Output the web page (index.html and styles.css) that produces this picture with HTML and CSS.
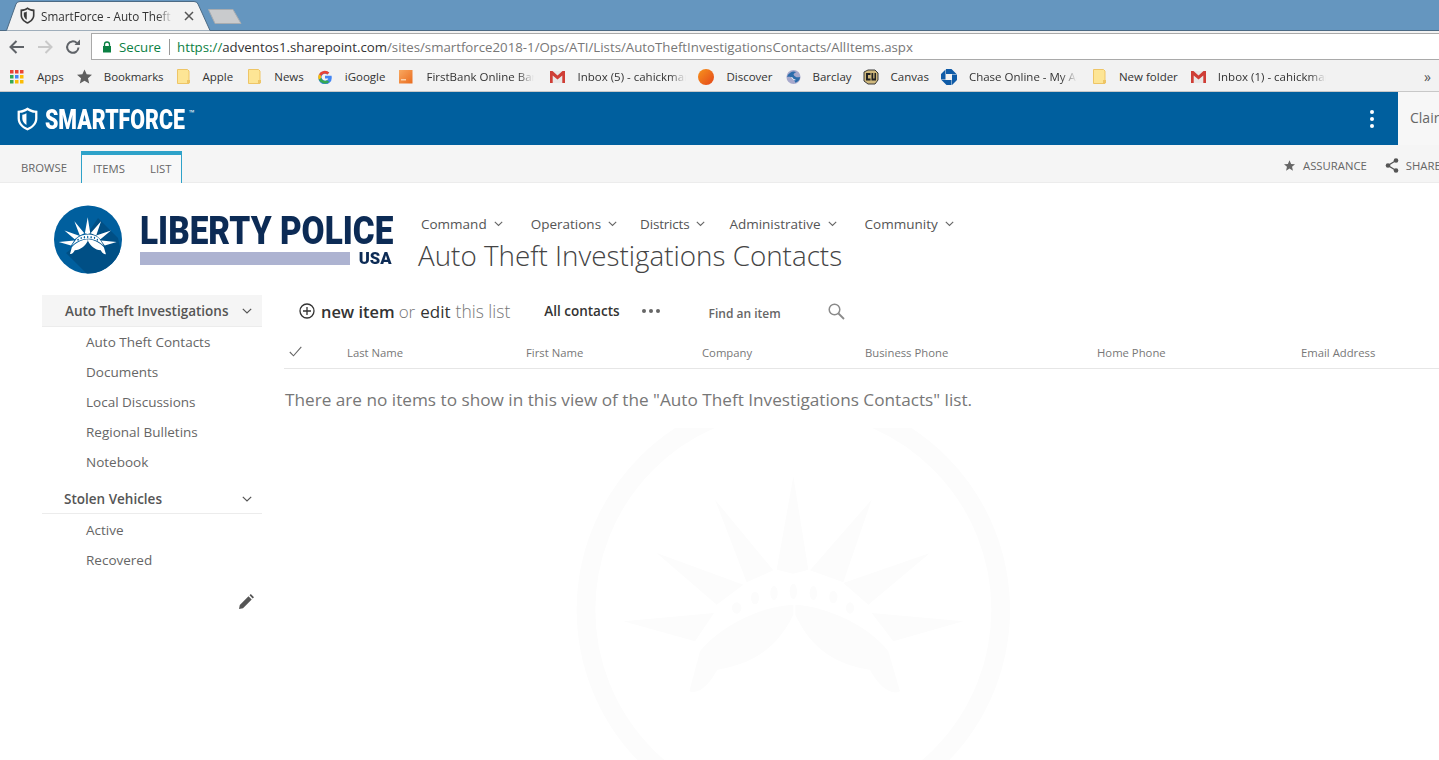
FILE: index.html
```html
<!DOCTYPE html>
<html lang="en">
<head>
<meta charset="utf-8">
<title>SmartForce - Auto Theft Investigations Contacts</title>
<link rel="stylesheet" href="styles.css">
</head>
<body>
<svg class="defs" width="0" height="0" aria-hidden="true">
  <defs>
    <symbol id="crown" viewBox="0 0 1410 1050">
      <path d="M700 200 745 480 700 492 650 480ZM465 270 640 482 560 518ZM935 270 850 518 750 482ZM290 430 550 525 470 585ZM1110 430 925 585 850 520ZM190 635 462 610 405 695ZM1210 635 1000 695 935 610Z"/>
      <path d="M700 585C600 590 480 650 420 725L388 845C420 855 450 820 472 780 570 765 650 720 700 615ZM706 585C800 590 930 650 985 725L1020 845C990 860 950 820 930 780 830 765 755 720 706 615Z"/>
    </symbol>
    <symbol id="crown-dots" viewBox="0 0 1410 1050">
      <ellipse cx="530" cy="595" rx="14" ry="17"/><ellipse cx="585" cy="565" rx="12" ry="19"/><ellipse cx="642" cy="550" rx="11" ry="21"/><ellipse cx="700" cy="545" rx="11" ry="23"/><ellipse cx="760" cy="550" rx="11" ry="21"/><ellipse cx="820" cy="562" rx="12" ry="19"/><ellipse cx="870" cy="595" rx="12" ry="17"/>
    </symbol>
    <symbol id="shield" viewBox="0 0 20 23">
      <path fill-rule="evenodd" d="M10 .5C7.500 2.500 4 3.500.5 3.500V11C.5 16.500 5 20.500 10 22.500 15 20.500 19.500 16.500 19.500 11V3.500C16 3.500 12.500 2.500 10 .5ZM10 3C8 4.500 5.500 5.400 2.700 5.600V11C2.700 15 6 18.500 10 20.200 14 18.500 17.300 15 17.300 11V5.600C14.500 5.400 12 4.500 10 3Z"/>
      <path d="M9 6C7.800 6.800 6.500 7.300 5 7.500V11C5 13.500 6.800 15.800 9 17.200Z"/>
    </symbol>
    <symbol id="gmail" viewBox="0 0 15 12">
      <path fill="#e8e8e8" d="M0 0h15v12H0z"/>
      <path fill="#cf3e36" d="M0 0h2.500L7.500 4.500 12.500 0H15v12h-2.700V4.500L7.500 8.500 2.700 4.500V12H0Z"/>
    </symbol>
    <symbol id="folder" viewBox="0 0 13 15">
      <path fill="#fde595" stroke="#eec566" d="M.5.500h10l1.500 1.500v12.500H.5Z"/>
      <path fill="#eec566" d="M10 11h3v3h-3z"/>
    </symbol>
    <linearGradient id="disc" x1="0" y1="0" x2="1" y2="1"><stop offset="0" stop-color="#f7941d"/><stop offset="1" stop-color="#e4461a"/></linearGradient>
    <linearGradient id="fb" x1="0" y1="0" x2="1" y2="1"><stop offset="0" stop-color="#f9a860"/><stop offset="1" stop-color="#e96c1f"/></linearGradient>
  </defs>
</svg>

<div class="window">
  <div class="tabstrip">
    <div class="tab">
      <svg class="tab-bg" width="206" height="31" viewBox="0 0 206 31"><path d="M.5 30.500 10 4Q11 1.500 14 1.500H188Q191 1.500 192 4L204 30.500" fill="#f2f2f2" stroke="#4c6a84"/></svg>
      <svg class="fav" width="15" height="17"><use href="#shield" fill="#3a3a3a"/></svg>
      <span class="tab-title">SmartForce - Auto Theft Investigations</span>
      <svg class="tab-x" width="10" height="10" viewBox="0 0 10 10"><path d="M1 1 9 9M9 1 1 9" stroke="#555" stroke-width="1.500"/></svg>
    </div>
    <svg class="newtab" width="36" height="17" viewBox="0 0 36 17"><path d="M1.500 1.500H26L34 15.500H8Z" fill="#c9cbcd" stroke="#a8acb0"/></svg>
  </div>

  <div class="toolbar">
    <svg class="tb-icon" width="16" height="14" viewBox="0 0 16 14"><path d="M15 7H2M7.500 1 1.500 7l6 6" fill="none" stroke="#5f6368" stroke-width="2"/></svg>
    <svg class="tb-icon" width="16" height="14" viewBox="0 0 16 14"><path d="M1 7h13M8.500 1l6 6-6 6" fill="none" stroke="#c9c9c9" stroke-width="2"/></svg>
    <svg class="tb-icon" width="16" height="16" viewBox="0 0 16 16"><path d="M13.500 8.500A5.700 5.700 0 1 1 11.800 4" fill="none" stroke="#5f6368" stroke-width="2"/><path d="M9.500 6H15V.500Z" fill="#5f6368"/></svg>
    <div class="omnibox">
      <svg class="lock" width="10" height="12" viewBox="0 0 10 12"><path d="M2.500 5V3.500a2.500 2.500 0 0 1 5 0V5" fill="none" stroke="#0b8043" stroke-width="1.300"/><path d="M1 5h8v6.500H1z" fill="#0b8043"/></svg>
      <span class="secure">Secure</span>
      <span class="omni-div"></span>
      <span class="url"><span class="u-scheme">https://</span><span class="u-host">adventos1.sharepoint.com</span>/sites/smartforce2018-1/Ops/ATI/Lists/AutoTheftInvestigationsContacts/AllItems.aspx</span>
    </div>
  </div>

  <div class="bookmarks">
    <div class="bm">
      <svg class="bm-i" width="14" height="14" viewBox="0 0 14 14"><path fill="#ea4335" d="M0 0h3.500v3.500H0zM5 0h3.500v3.500H5z"/><path fill="#ea4335" d="M10 0h3.500v3.500H10z"/><path fill="#fbbc05" d="M10 5h3.500v3.500H10zM10 10h3.500v3.500H10zM5 10h3.500v3.500H5z"/><path fill="#34a853" d="M0 5h3.500v3.500H0zM0 10h3.500v3.500H0z"/><path fill="#4285f4" d="M5 5h3.500v3.500H5z"/></svg>
      <span>Apps</span>
    </div>
    <div class="bm">
      <svg class="bm-i bm-t" width="15" height="15" viewBox="0 0 16 15"><path fill="#5f5f5f" d="M8 0l2.300 5.200 5.700.5-4.300 3.700 1.300 5.600L8 12l-5 3 1.300-5.600L0 5.700l5.700-.5Z"/></svg>
      <span class="bm-narrow">Bookmarks</span>
    </div>
    <div class="bm m15"><svg class="bm-i" width="13" height="15"><use href="#folder"/></svg><span>Apple</span></div>
    <div class="bm m14"><svg class="bm-i" width="13" height="15"><use href="#folder"/></svg><span>News</span></div>
    <div class="bm">
      <svg class="bm-i" width="14" height="14" viewBox="0 0 14 14"><path d="M12.700 5.800H7v2.600h3.300A3.500 3.500 0 1 1 9.300 4.500l2-1.900A6.700 6.700 0 1 0 13.700 7c0-.4-.1-.8-.1-1.200Z" fill="#4285f4"/><path d="M.9 4.200 3.300 6A3.800 3.800 0 0 1 9.300 4.500l2-1.900A6.700 6.700 0 0 0 .9 4.200Z" fill="#ea4335"/><path d="M.9 4.200A6.700 6.700 0 0 0 .8 9.800L3.300 8a3.800 3.800 0 0 1 0-2Z" fill="#fbbc05"/><path d="M.8 9.800A6.700 6.700 0 0 0 11.400 12L9 10.200A3.800 3.800 0 0 1 3.300 8Z" fill="#34a853"/></svg>
      <span>iGoogle</span>
    </div>
    <div class="bm m16">
      <svg class="bm-i" width="15" height="15" viewBox="0 0 15 15"><path fill="url(#fb)" d="M1 1h13.500v13.500H1z"/><path fill="#fbd0a8" d="M3 10h5v1.500H3z"/></svg>
      <span class="fade fade-108">FirstBank Online Banking</span>
    </div>
    <div class="bm m12"><svg class="bm-i bm-t" width="15" height="12"><use href="#gmail"/></svg><span class="fade fade-109">Inbox (5) - cahickman@gmail</span></div>
    <div class="bm">
      <svg class="bm-i bm-t" width="16" height="16" viewBox="0 0 16 16"><circle cx="8" cy="8" r="8" fill="url(#disc)"/></svg>
      <span>Discover</span>
    </div>
    <div class="bm m11">
      <svg class="bm-i bm-t" width="15" height="16" viewBox="0 0 16 16"><circle cx="8" cy="8" r="7.500" fill="#a7a9cc"/><path d="M1 8c3-1 7 0 9 6 3-1 5-3 5-6-3 1-6 0-7-3 1-1 2-2 3-2C8 1 3 3 1 8Z" fill="#2b6cab"/><path d="M6 8c1 2 2 3 4 3" fill="none" stroke="#fff"/></svg>
      <span>Barclay</span>
    </div>
    <div class="bm m12">
      <svg class="bm-i bm-t" width="16" height="16" viewBox="0 0 16 16"><path d="M1 3 5 1h7l3 3v7l-3 4H5L1 12Z" fill="#cfb87c" stroke="#3a3a3a"/><path d="M3 4h4.500v2H5v3.500h2.500v2H3ZM8.500 4h1.700v5.500h1.300V4H13v7.500H8.500Z" fill="#222"/></svg>
      <span>Canvas</span>
    </div>
    <div class="bm m16">
      <svg class="bm-i bm-t" width="16" height="16" viewBox="0 0 16 16"><path fill="#0f5ba7" d="M5 0h5.500l5 5H5ZM16 5.500V11l-5 5V5.500ZM10.500 16H5.500l-5-5h10ZM0 10.500V5l4.500-4.500v10Z"/></svg>
      <span class="fade fade-108">Chase Online - My Accounts</span>
    </div>
    <div class="bm"><svg class="bm-i" width="13" height="15"><use href="#folder"/></svg><span>New folder</span></div>
    <div class="bm"><svg class="bm-i bm-t" width="15" height="12"><use href="#gmail"/></svg><span class="fade fade-108">Inbox (1) - cahickman@gmail</span></div>
    <span class="bm-more">»</span>
  </div>

  <header class="suitebar">
    <div class="brand">
      <svg class="brand-shield" width="21" height="24"><use href="#shield" fill="#fff"/></svg>
      <span class="brand-name">SMARTFORCE</span>
      <span class="brand-tm">™</span>
    </div>
    <div class="dots"><i></i><i></i><i></i></div>
    <div class="user">Claire Hickman</div>
  </header>

  <div class="ribbon">
    <span class="rib-tab">BROWSE</span>
    <div class="rib-group"><span class="rib-tab rib-in">ITEMS</span><span class="rib-tab rib-in">LIST</span></div>
    <div class="rib-right">
      <svg class="rib-star" width="11" height="11" viewBox="0 0 16 15"><path fill="#666" d="M8 0l2.300 5.200 5.700.5-4.300 3.700 1.300 5.600L8 12l-5 3 1.300-5.600L0 5.700l5.700-.5Z"/></svg>
      <span class="rib-act">ASSURANCE</span>
      <svg class="rib-share" width="14" height="15" viewBox="0 0 14 15"><path d="M11 2.500 3 7.500l8 5" fill="none" stroke="#555" stroke-width="1.300"/><circle cx="11" cy="2.500" r="2.300" fill="#555"/><circle cx="3" cy="7.500" r="2.300" fill="#555"/><circle cx="11" cy="12.500" r="2.300" fill="#555"/></svg>
      <span class="rib-act rib-sh">SHARE</span>
    </div>
  </div>

  <div class="masthead">
    <svg class="site-logo" width="68" height="69" viewBox="0 0 68 69">
      <defs><clipPath id="logo-clip"><circle cx="34" cy="34.500" r="34"/></clipPath></defs>
      <circle cx="34" cy="34.500" r="34" fill="#005f9e"/>
      <path clip-path="url(#logo-clip)" d="M44 13 64 33 70 60 50 72H36L12 48 30 34Z" fill="#004f85"/>
      <svg x="-6" y="1" width="80" height="59.600" viewBox="0 0 1410 1050" fill="#fff">
        <use href="#crown" width="1410" height="1050"/>
        <path d="M418 700 510 570C600 490 800 470 905 575L985 700C900 620 800 575 702 575 600 575 490 630 418 700Z"/>
        <use href="#crown-dots" width="1410" height="1050" fill="#005f9e"/>
      </svg>
    </svg>
    <div class="wordmark">
      <div class="wm-name">LIBERTY POLICE</div>
      <div class="wm-sub"><span class="wm-bar"></span><span class="wm-usa">USA</span></div>
    </div>
    <div class="site-head">
      <nav class="topnav">
        <span class="tn">Command<svg class="chev" width="9" height="6" viewBox="0 0 9 6"><path d="M.8.800 4.500 4.500 8.200.800" fill="none" stroke="#666" stroke-width="1.100"/></svg></span>
        <span class="tn tn-a">Operations<svg class="chev" width="9" height="6" viewBox="0 0 9 6"><path d="M.8.800 4.500 4.500 8.200.800" fill="none" stroke="#666" stroke-width="1.100"/></svg></span>
        <span class="tn tn-b">Districts<svg class="chev" width="9" height="6" viewBox="0 0 9 6"><path d="M.8.800 4.500 4.500 8.200.800" fill="none" stroke="#666" stroke-width="1.100"/></svg></span>
        <span class="tn">Administrative<svg class="chev" width="9" height="6" viewBox="0 0 9 6"><path d="M.8.800 4.500 4.500 8.200.800" fill="none" stroke="#666" stroke-width="1.100"/></svg></span>
        <span class="tn">Community<svg class="chev" width="9" height="6" viewBox="0 0 9 6"><path d="M.8.800 4.500 4.500 8.200.800" fill="none" stroke="#666" stroke-width="1.100"/></svg></span>
      </nav>
      <h1 class="page-title">Auto Theft Investigations Contacts</h1>
    </div>
  </div>

  <div class="body">
    <aside class="side">
      <div class="side-h side-h-on"><span>Auto Theft Investigations</span><svg width="10" height="6" viewBox="0 0 10 6"><path d="M.8.800 5 5 9.200.800" fill="none" stroke="#555" stroke-width="1.200"/></svg></div>
      <a class="side-l">Auto Theft Contacts</a>
      <a class="side-l">Documents</a>
      <a class="side-l">Local Discussions</a>
      <a class="side-l">Regional Bulletins</a>
      <a class="side-l">Notebook</a>
      <div class="side-h side-h-2"><span>Stolen Vehicles</span><svg width="10" height="6" viewBox="0 0 10 6"><path d="M.8.800 5 5 9.200.800" fill="none" stroke="#555" stroke-width="1.200"/></svg></div>
      <a class="side-l">Active</a>
      <a class="side-l">Recovered</a>
      <div class="side-edit"><svg width="15" height="15" viewBox="0 0 15 15"><path fill="#555" d="M0 15l.8-4L9.500 2.300l3.200 3.200L4 14.200ZM10.500 1.300 11.800 0 15 3.200l-1.300 1.300Z"/></svg></div>
    </aside>
    <main class="content">
      <div class="cmd">
        <svg class="plus" width="16" height="16" viewBox="0 0 16 16"><circle cx="8" cy="8" r="7" fill="none" stroke="#333" stroke-width="1.300"/><path d="M8 4v8M4 8h8" stroke="#333" stroke-width="1.300"/></svg>
        <span class="c-new">new item</span>
        <span class="c-or">or</span>
        <span class="c-edit">edit</span>
        <span class="c-mid">this list</span>
        <span class="c-view">All contacts</span>
        <span class="c-dots"><i></i><i></i><i></i></span>
        <span class="c-find">Find an item</span>
        <svg class="c-search" width="17" height="17" viewBox="0 0 17 17"><circle cx="6.500" cy="6.500" r="5.300" fill="none" stroke="#8a8a8a" stroke-width="1.500"/><path d="M10.500 10.500 16 16" stroke="#8a8a8a" stroke-width="1.800"/></svg>
      </div>
      <div class="thead">
        <span class="th th-check"><svg width="13" height="11" viewBox="0 0 13 11"><path d="M.8 6 4.500 9.800 12.300.8" fill="none" stroke="#666" stroke-width="1.100"/></svg></span>
        <span class="th th-last">Last Name</span>
        <span class="th th-first">First Name</span>
        <span class="th th-co">Company</span>
        <span class="th th-biz">Business Phone</span>
        <span class="th th-home">Home Phone</span>
        <span class="th">Email Address</span>
      </div>
      <p class="empty">There are no items to show in this view of the "Auto Theft Investigations Contacts" list.</p>
    </main>
  </div>

  <svg class="watermark" width="470" height="332" viewBox="0 55 1410 996" fill="#fcfcfc">
    <circle cx="700" cy="600" r="622" fill="none" stroke="#fcfcfc" stroke-width="56"/>
    <use href="#crown" width="1410" height="1050"/>
    <use href="#crown-dots" width="1410" height="1050"/>
  </svg>
</div>
</body>
</html>
```
FILE: styles.css
```css
* { box-sizing: border-box; }
html, body { margin: 0; height: 100%; overflow: hidden; background: #fff; }
body { font-family: "Open Sans", "Noto Sans", sans-serif; color: #444; }
.defs { position: absolute; }
.window { position: relative; width: 1439px; height: 760px; overflow: hidden; }

/* browser chrome */
.tabstrip { height: 31px; background: #6596bf; border-bottom: 1px solid #4c6a84; display: flex; }
.tab { position: relative; width: 206px; height: 31px; margin-left: 6px; display: flex; align-items: center; padding: 0 0 0 14px; flex: none; }
.tab-bg { position: absolute; left: 0; top: 0; }
.fav { position: relative; flex: none; }
.tab-title { position: relative; width: 132px; margin-left: 6px; font-size: 11.700px; color: #333; white-space: nowrap; overflow: hidden; -webkit-mask-image: linear-gradient(90deg, #000 88%, transparent); mask-image: linear-gradient(90deg, #000 88%, transparent); }
.tab-x { position: relative; margin-left: 11px; }
.newtab { margin: 8px 0 0 -5px; flex: none; }

.toolbar { height: 31px; background: #f2f2f2; display: flex; align-items: center; padding: 0 0 0 9px; }
.tb-icon { flex: none; margin-right: 12px; }
.omnibox { height: 27px; width: 1360px; flex: none; margin-left: -2px; background: #fff; border: 1px solid #a9a9a9; border-right: 0; display: flex; align-items: center; padding-left: 10px; }
.lock { flex: none; }
.secure { margin-left: 7px; font-size: 13.250px; color: #0b8043; }
.omni-div { width: 1px; height: 16px; background: #999; margin: 0 7px 0 8px; }
.url { font-size: 13.250px; color: #777; white-space: nowrap; }
.u-scheme { color: #0b8043; }
.u-host { color: #333; }

.bookmarks { height: 30px; background: #f2f2f2; border-bottom: 1px solid #c8c8c8; display: flex; align-items: center; padding-left: 10px; font-size: 11.500px; color: #333; white-space: nowrap; }
.bm { display: flex; align-items: center; margin-right: 13px; flex: none; }
.m11 { margin-right: 11px; }
.m12 { margin-right: 12px; }
.m14 { margin-right: 14px; }
.m15 { margin-right: 15px; }
.m16 { margin-right: 16px; }
.bm-i { margin-right: 13px; flex: none; }
.bm-t { margin-right: 12px; }
.bm-narrow { letter-spacing: -.1px; }
.fade { overflow: hidden; -webkit-mask-image: linear-gradient(90deg, #000 85%, transparent); mask-image: linear-gradient(90deg, #000 85%, transparent); }
.fade-108 { width: 108px; }
.fade-109 { width: 109px; }
.bm-more { margin-left: auto; margin-right: 8px; font-size: 14px; color: #555; }

/* suite bar */
.suitebar { height: 53px; background: #005f9e; display: flex; align-items: center; padding-left: 17px; }
.brand { display: flex; align-items: center; flex: none; width: 1330px; color: #fff; padding-top: 2px; }
.brand-shield { flex: none; margin-top: -2px; }
.brand-name { display: inline-block; width: 141px; margin-left: 7px; font-family: Roboto, sans-serif; font-weight: 900; font-size: 27px; line-height: 30px; transform: scaleX(.79); transform-origin: left center; white-space: nowrap; }
.brand-tm { font-size: 7px; line-height: 8px; align-self: flex-start; margin: 4px 0 0 3px; }
.dots { width: 51px; flex: none; display: flex; flex-direction: column; align-items: flex-start; gap: 3px; padding-left: 23px; }
.dots i { width: 4px; height: 4px; border-radius: 50%; background: #fff; }
.user { height: 53px; flex: none; width: 100px; background: #f7f7f7; padding-left: 12px; line-height: 52px; font-size: 14px; color: #666; white-space: nowrap; }

/* ribbon */
.ribbon { height: 38px; background: #f5f5f5; border-bottom: 1px solid #ececec; display: flex; font-size: 11.300px; color: #666; }
.rib-tab { display: flex; align-items: center; padding: 8px 0 0 21px; }
.rib-group { display: flex; height: 32px; margin: 6px 0 0 14px; padding: 0 10px 2px 0; border: 1px solid #2ea2c9; border-top: 4px solid #2ea2c9; border-bottom: 0; background: #f8f8f8; }
.rib-group .rib-tab { padding: 0 0 0 11px; }
.rib-group .rib-in + .rib-in { padding-left: 25px; }
.rib-right { margin-left: auto; display: flex; align-items: center; width: 155px; flex: none; padding-top: 4px; white-space: nowrap; overflow: hidden; }
.rib-star { flex: none; }
.rib-act { margin-left: 8px; }
.rib-share { margin-left: 18px; flex: none; }
.rib-sh { margin-left: 7px; }

/* masthead */
.masthead { height: 112px; display: flex; padding: 22px 0 0 54px; }
.site-logo { flex: none; }
.wordmark { width: 253px; margin-left: 18px; padding-top: 9px; flex: none; }
.wm-name { font-family: Roboto, sans-serif; font-weight: 900; font-size: 38px; line-height: 34px; color: #0c2b55; white-space: nowrap; transform: scaleX(.878); transform-origin: left center; }
.wm-sub { display: flex; align-items: center; justify-content: space-between; margin-top: 3px; }
.wm-bar { width: 210px; height: 13px; background: #adb3d1; }
.wm-usa { font-family: Roboto, sans-serif; font-weight: 900; font-size: 17px; line-height: 14px; color: #0c2b55; margin-right: 1px; transform: scaleX(.98); transform-origin: right center; }
.site-head { margin-left: 25px; }
.topnav { display: flex; gap: 28px; height: 20px; padding: 0 0 0 3px; margin-top: 9px; font-size: 13.500px; line-height: 20px; color: #555; }
.tn { display: flex; align-items: center; white-space: nowrap; }
.tn-a { margin-right: -5px; }
.tn-b { margin-right: -4px; letter-spacing: -.2px; }
.chev { margin-left: 7px; }
.page-title { margin: 3px 0 0; font-weight: 300; font-size: 27.800px; line-height: 36px; color: #444; white-space: nowrap; }

/* body */
.body { display: flex; padding-left: 42px; }
.side { width: 220px; flex: none; font-size: 13.500px; color: #666; }
.side-h { display: flex; align-items: center; justify-content: space-between; font-weight: 600; color: #555; padding-right: 10px; border-bottom: 1px solid #ececec; }
.side-h-on { height: 32px; padding-left: 23px; background: #f5f5f5; }
.side-h-2 { height: 29px; margin: 8px 0 1px; padding: 0 10px 0 22px; }
.side-l { display: block; height: 30px; line-height: 30px; padding-left: 44px; }
.side-edit { display: flex; justify-content: flex-end; padding: 19px 8px 0 0; }
.content { flex: 1; min-width: 0; margin-left: 22px; }
.cmd { height: 34px; padding-bottom: 2px; display: flex; align-items: center; padding-left: 15px; white-space: nowrap; }
.plus { flex: none; margin-right: 6px; }
.c-new { font-size: 16.400px; font-weight: 600; color: #333; margin-right: 4px; }
.c-or { font-size: 17px; color: #777; font-weight: 300; margin-right: 5px; }
.c-edit { font-size: 17px; color: #333; margin-right: 5px; }
.c-mid { font-size: 17.500px; color: #777; font-weight: 300; margin-right: 5px; }
.c-view { font-size: 13.500px; font-weight: 600; color: #333; margin-left: 29px; }
.c-dots { display: flex; gap: 3px; margin-left: 22px; }
.c-dots i { width: 4px; height: 4px; border-radius: 50%; background: #666; }
.c-find { font-size: 12px; font-weight: 600; color: #666; margin: 4px 47px 0 49px; }
.c-search { flex: none; }
.thead { height: 40px; padding-top: 8px; display: flex; align-items: center; border-bottom: 1px solid #e6e6e6; font-size: 11.300px; color: #777; white-space: nowrap; }
.th { flex: none; display: block; }
.th-check { width: 63px; padding-left: 5px; }
.th-last { width: 179px; }
.th-first { width: 176px; }
.th-co { width: 163px; }
.th-biz { width: 232px; }
.th-home { width: 204px; }
.empty { margin: 20px 0 0 1px; font-size: 17.200px; font-weight: 400; line-height: 22px; color: #777; white-space: nowrap; }

.watermark { position: absolute; left: 560px; top: 428px; }
```
